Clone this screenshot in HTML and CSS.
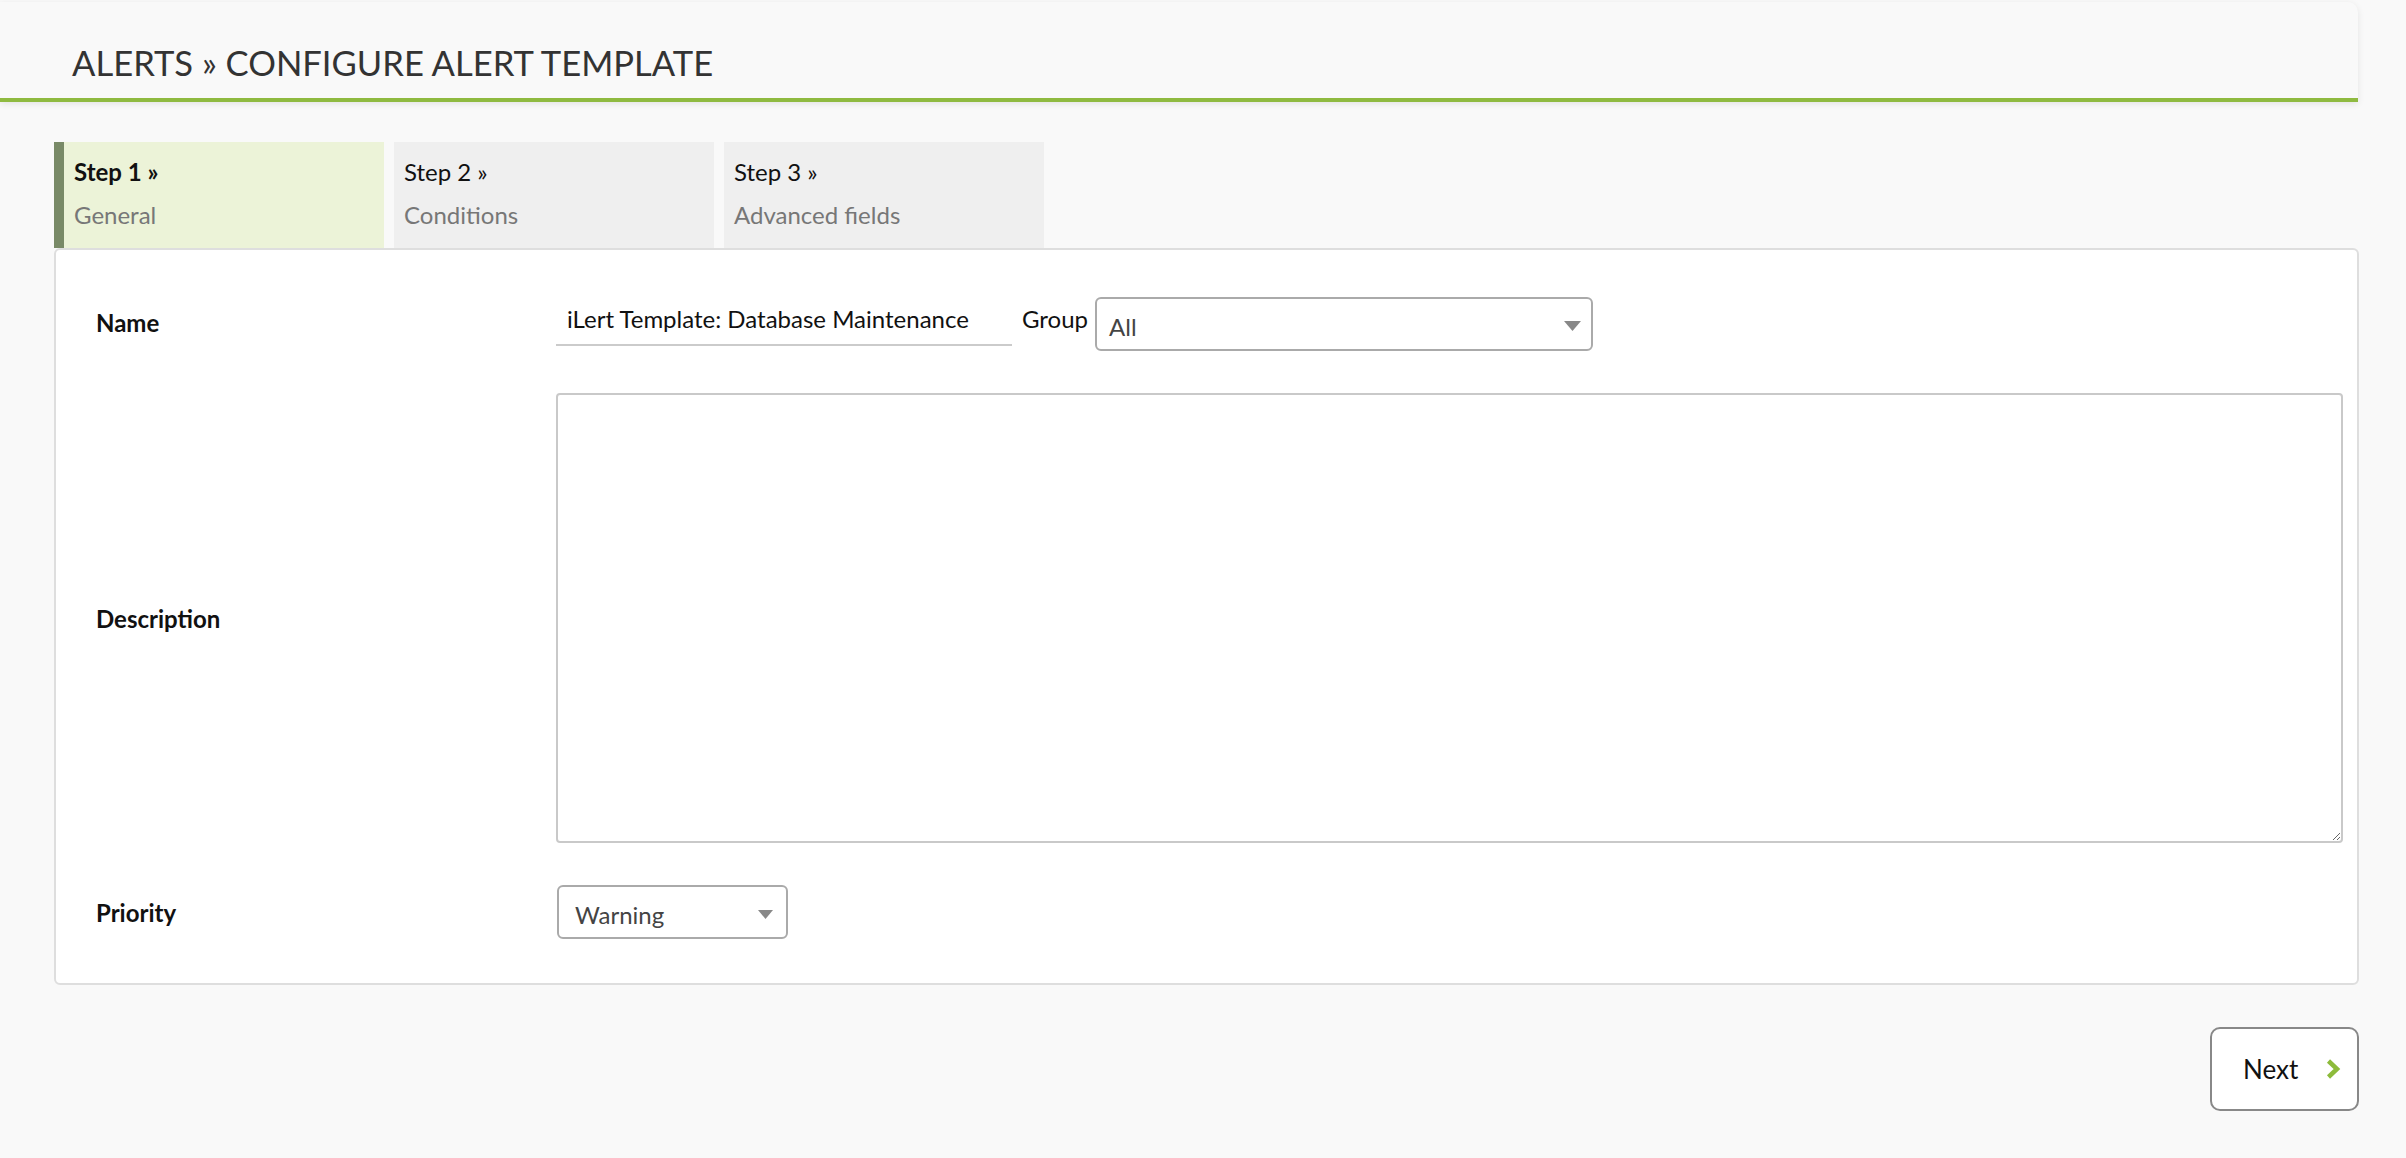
FILE: index.html
```html
<!DOCTYPE html>
<html lang="en">
<head>
<meta charset="utf-8">
<title>Configure Alert Template</title>
<link rel="stylesheet" href="styles.css">
</head>
<body>
<header class="page-header">
  <h1 class="page-title">ALERTS » CONFIGURE ALERT TEMPLATE</h1>
</header>
<main class="main">
  <nav class="steps">
    <div class="step step-active">
      <div class="step-num">Step 1 »</div>
      <div class="step-name">General</div>
    </div>
    <div class="step">
      <div class="step-num">Step 2 »</div>
      <div class="step-name">Conditions</div>
    </div>
    <div class="step">
      <div class="step-num">Step 3 »</div>
      <div class="step-name">Advanced fields</div>
    </div>
  </nav>
  <section class="card">
    <div class="form-grid">
      <label class="field-label field-label-name">Name</label>
      <div class="name-cell">
        <input class="text-input" type="text" value="iLert Template: Database Maintenance">
        <span class="inline-label">Group</span>
        <div class="select select-group">
          <span class="select-value">All</span>
          <svg class="select-arrow" width="17" height="10" viewBox="0 0 17 10"><polygon points="0,0 17,0 8.5,10" fill="#888"/></svg>
        </div>
      </div>

      <label class="field-label">Description</label>
      <div class="desc-cell">
        <textarea class="textarea"></textarea>
      </div>

      <label class="field-label">Priority</label>
      <div class="prio-cell">
        <div class="select select-prio">
          <span class="select-value">Warning</span>
          <svg class="select-arrow" width="15" height="9" viewBox="0 0 15 9"><polygon points="0,0 15,0 7.5,9" fill="#888"/></svg>
        </div>
      </div>
    </div>
  </section>
  <div class="actions">
    <button class="next-btn" type="button">
      <span>Next</span>
      <svg width="15" height="20" viewBox="0 0 15 20"><polyline points="2.5,2 11,10 2.5,18" fill="none" stroke="#8dbb3b" stroke-width="4.5"/></svg>
    </button>
  </div>
</main>
</body>
</html>
```

FILE: styles.css
```css
* { box-sizing: border-box; }

html, body {
  margin: 0;
  padding: 0;
  background: #f9f9f9;
  font-family: Lato, "Open Sans", "Liberation Sans", sans-serif;
  color: #111;
}

.page-header {
  margin: 2px 48px 0 0;
  height: 100px;
  background: #f9f9f9;
  border-bottom: 4px solid #8fba40;
  border-top-right-radius: 10px;
  box-shadow: 0 2px 7px rgba(0, 0, 0, 0.09);
  padding: 40px 0 0 72px;
}

.page-title {
  margin: 0;
  font-size: 34.6px;
  font-weight: 400;
  line-height: 1.2;
  color: #333;
}

.main {
  padding: 40px 47px 0 54px;
}

.steps {
  display: flex;
  gap: 10px;
  height: 106px;
}

.step {
  width: 320px;
  background: #efefef;
  padding: 8px 0 0 10px;
  font-size: 24px;
  line-height: 43px;
}

.step-active {
  width: 330px;
  background: #ecf3d8;
  border-left: 10px solid #798a67;
}

.step-num {
  color: #111;
}

.step-active .step-num {
  font-weight: 700;
}

.step-name {
  color: #777;
}

.card {
  background: #fff;
  border: 2px solid #dedede;
  border-radius: 6px;
  padding: 47px 14px 44px 40px;
}

.form-grid {
  display: grid;
  grid-template-columns: 460px 1fr;
  grid-template-rows: 54px 450px 54px;
  row-gap: 42px;
  align-items: center;
}

.field-label {
  font-size: 24px;
  font-weight: 700;
  color: #111;
}

.field-label-name {
  margin-bottom: 4px;
}

.name-cell {
  display: flex;
  align-items: center;
  height: 54px;
}

.text-input {
  align-self: flex-start;
  width: 456px;
  height: 49px;
  border: none;
  border-bottom: 2px solid #cbcbcb;
  background: transparent;
  padding: 0 0 4px 11px;
  font-family: inherit;
  font-size: 24px;
  color: #111;
  outline: none;
}

.inline-label {
  margin: 0 7px 12px 10px;
  font-size: 24px;
  color: #111;
}

.select {
  display: flex;
  align-items: center;
  justify-content: space-between;
  height: 54px;
  background: #fff;
  border: 2px solid #aaa;
  border-radius: 6px;
  font-size: 24px;
  color: #444;
}

.select-group {
  width: 498px;
  padding: 4px 10px 0 12px;
}

.select-prio {
  width: 231px;
  padding: 4px 13px 0 16px;
}

.select-arrow {
  display: block;
  flex: none;
}

.desc-cell {
  height: 450px;
}

.textarea {
  display: block;
  width: 100%;
  height: 450px;
  border: 2px solid #c9c9c9;
  border-radius: 4px;
  background: #fff;
  font-family: inherit;
  font-size: 24px;
  padding: 8px 12px;
  outline: none;
}

.prio-cell {
  display: flex;
  align-items: center;
  padding-left: 1px;
}

.actions {
  display: flex;
  justify-content: flex-end;
  margin-top: 42px;
}

.next-btn {
  display: flex;
  align-items: center;
  gap: 28px;
  width: 149px;
  height: 84px;
  padding: 0 15px 0 31px;
  background: #fff;
  border: 2px solid #888;
  border-radius: 10px;
  font-family: inherit;
  font-size: 26px;
  color: #111;
  cursor: pointer;
}

.next-btn svg {
  display: block;
  flex: none;
}
```
